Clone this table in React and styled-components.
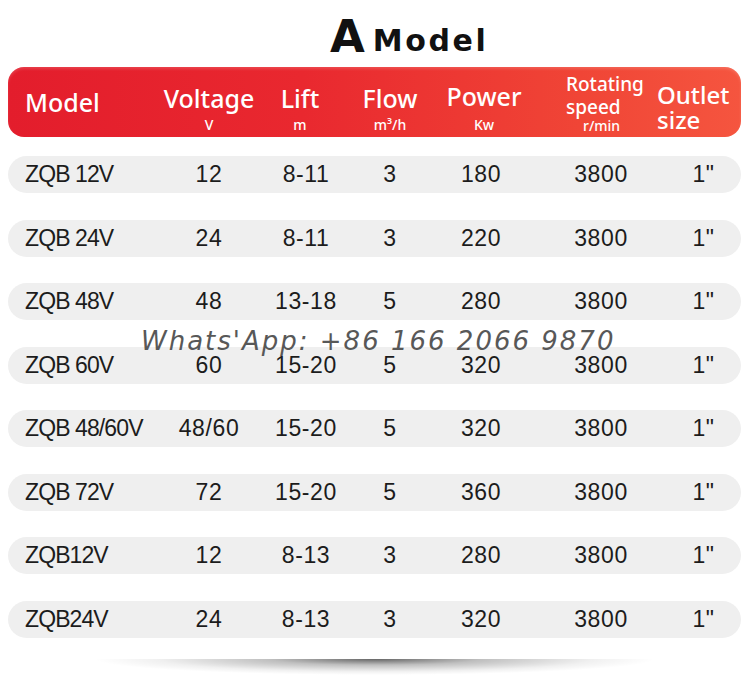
import React from "react";
import styled, { createGlobalStyle } from "styled-components";

const Global = createGlobalStyle`
  html, body { margin: 0; padding: 0; background: #fff; }
  body { width: 750px; height: 683px; overflow: hidden; }
`;

const Page = styled.div`
  position: relative;
  width: 750px;
  height: 683px;
  display: flex;
  flex-direction: column;
  align-items: stretch;
  background: #fff;
`;

const Title = styled.h1`
  margin: 0;
  height: 67px;
  display: flex;
  align-items: baseline;
  gap: 8px;
  padding: 14px 0 0 330px;
  box-sizing: border-box;
  font-family: "DejaVu Sans", "Noto Sans", sans-serif;
  font-weight: 700;
  color: #111;
  line-height: 1;
`;

const TitleA = styled.span`
  font-size: 45px;
`;

const TitleWord = styled.span`
  font-size: 30px;
  letter-spacing: 2.6px;
  position: relative;
  top: -1px;
`;

const HeaderBar = styled.div`
  margin: 0 9px 0 8px;
  height: 70px;
  border-radius: 16px;
  background: linear-gradient(90deg, #e31d2c 0%, #e9282f 40%, #f04536 78%, #f5553f 100%);
  box-shadow: inset 0 2px 3px rgba(255, 255, 255, 0.15);
  display: grid;
  grid-template-columns: 152px 98px 84px 96px 92px 122px 1fr;
  color: #fff;
  font-family: "Noto Sans", "Open Sans", sans-serif;
  font-weight: 500;
`;

const HCell = styled.div`
  display: flex;
  flex-direction: column;
  align-items: ${(p) => (p.$left ? "flex-start" : "center")};
  justify-content: center;
  padding-left: ${(p) => p.$pl || 0}px;
  padding-top: ${(p) => p.$pt || 0}px;
  line-height: 1;
`;

const HMain = styled.span`
  font-size: ${(p) => p.$size || 25}px;
  line-height: ${(p) => p.$lh || "1"};
  white-space: nowrap;
`;

const HUnit = styled.span`
  font-size: 14px;
  line-height: 1;
  margin-top: ${(p) => (p.$mt === undefined ? 7 : p.$mt)}px;
  margin-left: ${(p) => p.$ml || 0}px;
`;

const Rows = styled.div`
  margin: 19px 9px 0 8px;
  display: flex;
  flex-direction: column;
  gap: 26.5px;
`;

const Row = styled.div`
  height: 37px;
  border-radius: 19px;
  background: #efefef;
  display: grid;
  grid-template-columns: 152px 98px 96px 72px 110px 130px 1fr;
  align-items: center;
  font-family: "Liberation Sans", Arial, sans-serif;
  font-size: 23px;
  color: #1c1c1c;
`;

const ModelCell = styled.div`
  padding-left: 17px;
  letter-spacing: -0.9px;
  white-space: nowrap;
`;

const Cell = styled.div`
  text-align: center;
  letter-spacing: 0.6px;
  white-space: nowrap;
`;

const Shadow = styled.div`
  margin: 21px auto 0;
  width: 700px;
  height: 20px;
  background: radial-gradient(ellipse 50% 100% at 50% 0%, rgba(0,0,0,0.6) 0%, rgba(0,0,0,0.25) 30%, rgba(0,0,0,0.06) 62%, rgba(0,0,0,0) 80%);
`;

const Watermark = styled.div`
  position: absolute;
  left: 141px;
  top: 328px;
  font-family: "DejaVu Sans", sans-serif;
  font-style: italic;
  font-size: 26px;
  line-height: 1;
  letter-spacing: 2px;
  color: #585858;
  white-space: nowrap;
  pointer-events: none;
`;

const data = [
  ["ZQB 12V", "12", "8-11", "3", "180", "3800", '1"'],
  ["ZQB 24V", "24", "8-11", "3", "220", "3800", '1"'],
  ["ZQB 48V", "48", "13-18", "5", "280", "3800", '1"'],
  ["ZQB 60V", "60", "15-20", "5", "320", "3800", '1"'],
  ["ZQB 48/60V", "48/60", "15-20", "5", "320", "3800", '1"'],
  ["ZQB 72V", "72", "15-20", "5", "360", "3800", '1"'],
  ["ZQB12V", "12", "8-13", "3", "280", "3800", '1"'],
  ["ZQB24V", "24", "8-13", "3", "320", "3800", '1"'],
];

export default function App() {
  return (
    <Page>
      <Global />
      <Title>
        <TitleA>A</TitleA>
        <TitleWord>Model</TitleWord>
      </Title>
      <HeaderBar>
        <HCell $left $pl={17}>
          <HMain>Model</HMain>
        </HCell>
        <HCell $pt={14}>
          <HMain>Voltage</HMain>
          <HUnit>V</HUnit>
        </HCell>
        <HCell $pt={14}>
          <HMain>Lift</HMain>
          <HUnit>m</HUnit>
        </HCell>
        <HCell $pt={14}>
          <HMain>Flow</HMain>
          <HUnit>m³/h</HUnit>
        </HCell>
        <HCell $pt={12}>
          <HMain>Power</HMain>
          <HUnit $mt={9}>Kw</HUnit>
        </HCell>
        <HCell $left $pl={36}>
          <HMain $size={19} $lh="24px">Rotating</HMain>
          <HMain $size={19} $lh="22px">speed</HMain>
          <HUnit $ml={17} $mt={1}>r/min</HUnit>
        </HCell>
        <HCell $left $pl={5} $pt={10}>
          <HMain $size={24} $lh="25px">Outlet</HMain>
          <HMain $size={24} $lh="25px">size</HMain>
        </HCell>
      </HeaderBar>
      <Rows>
        {data.map((r, i) => (
          <Row key={i}>
            <ModelCell>{r[0]}</ModelCell>
            {r.slice(1).map((v, j) => (
              <Cell key={j}>{v}</Cell>
            ))}
          </Row>
        ))}
      </Rows>
      <Shadow />
      <Watermark>Whats'App: +86 166 2066 9870</Watermark>
    </Page>
  );
}
